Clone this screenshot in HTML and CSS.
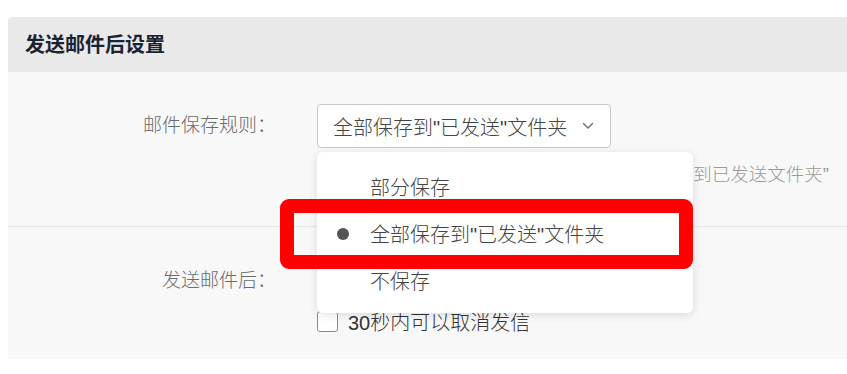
FILE: index.html
```html
<!DOCTYPE html>
<html lang="zh-CN">
<head>
<meta charset="utf-8">
<title>发送邮件后设置</title>
<link rel="stylesheet" href="styles.css">
</head>
<body>
<section class="panel">
  <header class="panel-header">
    <h2 class="panel-title">发送邮件后设置</h2>
  </header>
  <div class="panel-body">
    <div class="row row-first">
      <div class="label">邮件保存规则：</div>
      <div class="field">
        <div class="select-wrap">
          <div class="select">
            <span class="select-value">全部保存到"已发送"文件夹</span>
            <svg class="chevron" width="12" height="8" viewBox="0 0 12 8"><path d="M1.5 1.5 L6 6 L10.5 1.5" fill="none" stroke="#777" stroke-width="1.5" stroke-linecap="round" stroke-linejoin="round"/></svg>
          </div>
          <ul class="dropdown">
            <li class="option"><span class="dot"></span><span>部分保存</span></li>
            <li class="option selected"><span class="dot"></span><span>全部保存到"已发送"文件夹</span></li>
            <li class="option"><span class="dot"></span><span>不保存</span></li>
            <li class="highlight"></li>
          </ul>
        </div>
        <p class="hint">选择此项后，发送成功的邮件都将被“全部保存到已发送文件夹”</p>
      </div>
    </div>
    <div class="row row-second">
      <div class="label">发送邮件后：</div>
      <div class="field">
        <div class="spacer"></div>
        <label class="check">
          <span class="box"></span>
          <span class="check-text">30秒内可以取消发信</span>
        </label>
      </div>
    </div>
  </div>
</section>
</body>
</html>
```

FILE: styles.css
```css
* { box-sizing: border-box; }

body {
  margin: 0;
  background: #ffffff;
  font-family: "Liberation Sans", "Noto Sans CJK SC", sans-serif;
  font-weight: 300;
  color: #444;
}

.panel {
  margin: 17px 0 0 8px;
  border-radius: 4px 0 0 0;
}

.panel-header {
  height: 55px;
  background: #e9e9e9;
  border-radius: 4px 0 0 0;
  display: flex;
  align-items: center;
  padding-left: 17px;
}

.panel-title {
  margin: 0;
  font-size: 20px;
  font-weight: bold;
  color: #1b2333;
  line-height: 1;
}

.panel-body {
  background: #f8f8f8;
}

.row {
  display: grid;
  grid-template-columns: 268px 1fr;
  column-gap: 41px;
}

.row-first {
  padding: 32px 0 38px;
  border-bottom: 1px solid #e8e8e8;
}

.row-second {
  padding: 32px 0 24px;
}

.label {
  text-align: right;
  font-size: 19px;
  line-height: 44px;
  color: #6b6b6b;
}

.field {
  min-width: 0;
}

.select-wrap {
  position: relative;
  width: 294px;
}

.select {
  height: 44px;
  border: 1px solid #c8c8c8;
  border-radius: 4px;
  background: #fff;
  display: flex;
  align-items: center;
  justify-content: space-between;
  padding: 0 16px 0 15px;
  font-size: 20px;
  color: #444;
}

.chevron { display: block; }

.hint {
  margin: 14px 0 0;
  font-size: 18.5px;
  line-height: 26px;
  color: #9a9a9a;
  white-space: nowrap;
}

.dropdown {
  position: absolute;
  top: 48px;
  left: 0;
  width: 376px;
  margin: 0;
  padding: 11px 0 9px;
  list-style: none;
  background: #fff;
  border-radius: 6px;
  box-shadow: 0 2px 10px rgba(0, 0, 0, 0.12);
  z-index: 5;
}

.option {
  height: 47px;
  display: flex;
  align-items: center;
  gap: 21px;
  padding-left: 20px;
  font-size: 20px;
  color: #444;
}

.dot {
  width: 12px;
  height: 12px;
  border-radius: 50%;
  background: #555;
  visibility: hidden;
}

.option.selected .dot { visibility: visible; }

.highlight {
  position: absolute;
  top: 47px;
  left: -37px;
  width: 413px;
  height: 70px;
  border: 14px solid #ff0000;
  border-radius: 9px;
  pointer-events: none;
}

.spacer { height: 44px; }

.check {
  margin-top: 4px;
  display: flex;
  align-items: center;
  gap: 10px;
  height: 28px;
}

.box {
  width: 21px;
  height: 21px;
  border: 1.5px solid #8a8a8a;
  border-radius: 3px;
  background: #fff;
}

.check-text {
  font-size: 20px;
  color: #333;
}
```
